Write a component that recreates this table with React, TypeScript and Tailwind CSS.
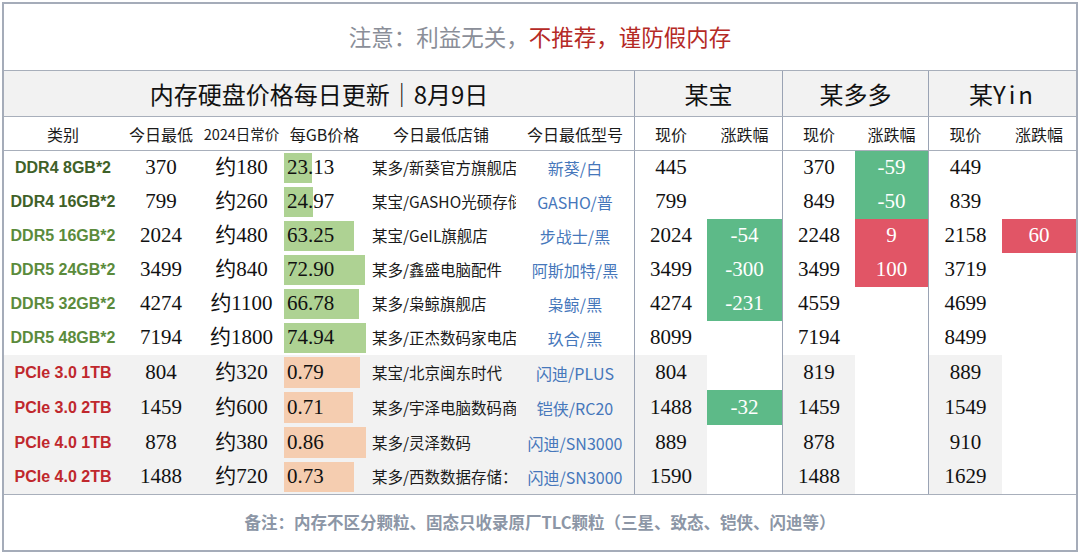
import React from "react";

type Change = { v: string; up: boolean } | null;

interface Row {
  cat: string;
  catColor: string;
  low: string;
  usual: string;
  gb: string;
  bar: number;
  barColor: string;
  store: string;
  model: string;
  tb: string;
  tbChg: Change;
  pdd: string;
  pddChg: Change;
  yin: string;
  yinChg: Change;
  ssd: boolean;
}

const DDR4 = "#3f6128";
const DDR5 = "#5b8b3c";
const PCIE = "#c0282d";
const GREEN_BAR = "#aed293";
const ORANGE_BAR = "#f5cdb0";

const ROWS: Row[] = [
  { cat: "DDR4 8GB*2", catColor: DDR4, low: "370", usual: "约180", gb: "23.13", bar: 28, barColor: GREEN_BAR, store: "某多/新葵官方旗舰店", model: "新葵/白", tb: "445", tbChg: null, pdd: "370", pddChg: { v: "-59", up: false }, yin: "449", yinChg: null, ssd: false },
  { cat: "DDR4 16GB*2", catColor: DDR4, low: "799", usual: "约260", gb: "24.97", bar: 29, barColor: GREEN_BAR, store: "某宝/GASHO光硕存储", model: "GASHO/普", tb: "799", tbChg: null, pdd: "849", pddChg: { v: "-50", up: false }, yin: "839", yinChg: null, ssd: false },
  { cat: "DDR5 16GB*2", catColor: DDR5, low: "2024", usual: "约480", gb: "63.25", bar: 70, barColor: GREEN_BAR, store: "某宝/GeIL旗舰店", model: "步战士/黑", tb: "2024", tbChg: { v: "-54", up: false }, pdd: "2248", pddChg: { v: "9", up: true }, yin: "2158", yinChg: { v: "60", up: true }, ssd: false },
  { cat: "DDR5 24GB*2", catColor: DDR5, low: "3499", usual: "约840", gb: "72.90", bar: 81, barColor: GREEN_BAR, store: "某多/鑫盛电脑配件", model: "阿斯加特/黑", tb: "3499", tbChg: { v: "-300", up: false }, pdd: "3499", pddChg: { v: "100", up: true }, yin: "3719", yinChg: null, ssd: false },
  { cat: "DDR5 32GB*2", catColor: DDR5, low: "4274", usual: "约1100", gb: "66.78", bar: 75, barColor: GREEN_BAR, store: "某多/枭鲸旗舰店", model: "枭鲸/黑", tb: "4274", tbChg: { v: "-231", up: false }, pdd: "4559", pddChg: null, yin: "4699", yinChg: null, ssd: false },
  { cat: "DDR5 48GB*2", catColor: DDR5, low: "7194", usual: "约1800", gb: "74.94", bar: 82, barColor: GREEN_BAR, store: "某多/正杰数码家电店", model: "玖合/黑", tb: "8099", tbChg: null, pdd: "7194", pddChg: null, yin: "8499", yinChg: null, ssd: false },
  { cat: "PCIe 3.0 1TB", catColor: PCIE, low: "804", usual: "约320", gb: "0.79", bar: 76, barColor: ORANGE_BAR, store: "某宝/北京闽东时代", model: "闪迪/PLUS", tb: "804", tbChg: null, pdd: "819", pddChg: null, yin: "889", yinChg: null, ssd: true },
  { cat: "PCIe 3.0 2TB", catColor: PCIE, low: "1459", usual: "约600", gb: "0.71", bar: 69, barColor: ORANGE_BAR, store: "某多/宇泽电脑数码商行", model: "铠侠/RC20", tb: "1488", tbChg: { v: "-32", up: false }, pdd: "1459", pddChg: null, yin: "1549", yinChg: null, ssd: true },
  { cat: "PCIe 4.0 1TB", catColor: PCIE, low: "878", usual: "约380", gb: "0.86", bar: 82, barColor: ORANGE_BAR, store: "某多/灵泽数码", model: "闪迪/SN3000", tb: "889", tbChg: null, pdd: "878", pddChg: null, yin: "910", yinChg: null, ssd: true },
  { cat: "PCIe 4.0 2TB", catColor: PCIE, low: "1488", usual: "约720", gb: "0.73", bar: 70, barColor: ORANGE_BAR, store: "某多/西数数据存储：", model: "闪迪/SN3000", tb: "1590", tbChg: null, pdd: "1488", pddChg: null, yin: "1629", yinChg: null, ssd: true },
];

const COLS = "grid grid-cols-[118px_78px_83px_83px_150px_118px_73px_75px_73px_73px_74px_74px]";
const SANS = "font-['Noto_Sans_CJK_SC',sans-serif]";
const SERIF = "font-['Liberation_Serif','Noto_Sans_CJK_SC',serif]";

function ChangeCell({ chg }: { chg: Change }) {
  if (!chg) return <div className="bg-white" />;
  return (
    <div
      className={`flex items-center justify-center text-[21px] text-white ${SERIF} ${
        chg.up ? "bg-[#e15566]" : "bg-[#5dba88]"
      }`}
    >
      {chg.v}
    </div>
  );
}

function DataRow({ r, last }: { r: Row; last: boolean }) {
  const bg = r.ssd ? "bg-[#f2f2f2]" : "bg-white";
  const num = `flex items-center justify-center text-[21px] text-[#111] ${SERIF}`;
  return (
    <div className={`${COLS} ${r.ssd ? "h-[35px]" : "h-[34px]"} ${last ? "border-b border-[#a8afbb]" : ""}`}>
      <div className={`flex items-center justify-center ${bg}`}>
        <span className="font-['Liberation_Sans',sans-serif] text-[16px] font-bold" style={{ color: r.catColor }}>
          {r.cat}
        </span>
      </div>
      <div className={`${num} ${bg}`}>{r.low}</div>
      <div className={`${num} ${bg}`}>{r.usual}</div>
      <div className={`relative flex items-center ${bg}`}>
        <div className="absolute top-[2px] bottom-[2px] left-[1px]" style={{ width: r.bar, background: r.barColor }} />
        <span className={`relative pl-[4px] text-[21px] text-[#111] ${SERIF}`}>{r.gb}</span>
      </div>
      <div className={`flex items-center overflow-hidden whitespace-nowrap pl-[6px] text-[15.5px] text-[#1a1a1a] ${SANS} ${bg}`}>
        {r.store}
      </div>
      <div className={`flex items-center justify-center whitespace-nowrap text-[16px] text-[#4677bb] ${SANS} ${bg}`}>
        {r.model}
      </div>
      <div className={`${num} ${bg} border-l border-[#9aa3b4]`}>{r.tb}</div>
      <ChangeCell chg={r.tbChg} />
      <div className={`${num} ${bg} border-l border-[#9aa3b4]`}>{r.pdd}</div>
      <ChangeCell chg={r.pddChg} />
      <div className={`${num} ${bg} border-l border-[#9aa3b4]`}>{r.yin}</div>
      <ChangeCell chg={r.yinChg} />
    </div>
  );
}

export default function App() {
  const h2 = `flex items-center justify-center whitespace-nowrap text-[16px] text-[#1a1a1a] ${SANS}`;
  return (
    <div className="w-[1080px] h-[554px] bg-white pt-[2px] pl-[2px]">
      <div className="flex h-[550px] w-[1076px] flex-col border-2 border-[#a5acb9] bg-white">
        {/* 注意 */}
        <div className={`flex h-[67px] items-center justify-center border-b border-[#a8afbb] text-[22.5px] ${SANS}`}>
          <span className="text-[#8a8e98]">注意：利益无关，</span>
          <span className="text-[#b52a26]">不推荐，谨防假内存</span>
        </div>

        {/* 表头 */}
        <div className={`grid h-[46px] grid-cols-[630px_148px_146px_148px] border-b border-[#a8afbb] bg-[#f2f2f2] text-[24px] text-[#111] ${SANS}`}>
          <div className="flex items-center justify-center">内存硬盘价格每日更新｜8月9日</div>
          <div className="flex items-center justify-center border-l border-[#9aa3b4]">某宝</div>
          <div className="flex items-center justify-center border-l border-[#9aa3b4]">某多多</div>
          <div className="flex items-center justify-center border-l border-[#9aa3b4]">
            某<span className="tracking-[3px]">Yin</span>
          </div>
        </div>
        <div className={`${COLS} h-[34px] border-b border-[#a8afbb]`}>
          <div className={h2}>类别</div>
          <div className={h2}>今日最低</div>
          <div className={`${h2} !text-[14.5px]`}>2024日常价</div>
          <div className={h2}>每GB价格</div>
          <div className={h2}>今日最低店铺</div>
          <div className={h2}>今日最低型号</div>
          <div className={`${h2} border-l border-[#9aa3b4]`}>现价</div>
          <div className={h2}>涨跌幅</div>
          <div className={`${h2} border-l border-[#9aa3b4]`}>现价</div>
          <div className={h2}>涨跌幅</div>
          <div className={`${h2} border-l border-[#9aa3b4]`}>现价</div>
          <div className={h2}>涨跌幅</div>
        </div>

        {ROWS.map((r, i) => (
          <DataRow key={r.cat} r={r} last={i === ROWS.length - 1} />
        ))}

        {/* 备注 */}
        <div className={`flex flex-1 items-center justify-center text-[16.5px] font-bold text-[#8c96a6] ${SANS}`}>
          备注：内存不区分颗粒、固态只收录原厂TLC颗粒（三星、致态、铠侠、闪迪等）
        </div>
      </div>
    </div>
  );
}
